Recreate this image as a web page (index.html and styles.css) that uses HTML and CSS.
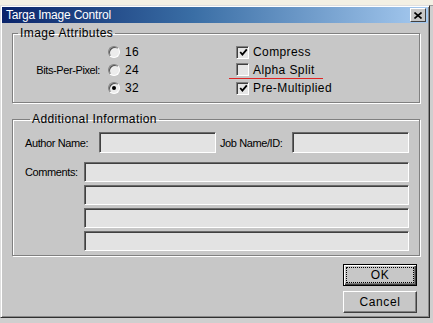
FILE: index.html
```html
<!DOCTYPE html>
<html lang="en">

<head>
    <meta charset="UTF-8">
    <title>Targa Image Control</title>
    <link rel="stylesheet" href="styles.css">
</head>

<body>
    <div class="app-strip"></div>

    <div class="dialog">
        <div class="titlebar">
            <span class="title">Targa Image Control</span>
            <span class="close">
                <svg width="8" height="7" viewBox="0 0 8 7">
                    <path d="M0.5 0.5 L7.5 6.5 M7.5 0.5 L0.5 6.5" stroke="#000" stroke-width="1.6" fill="none" />
                </svg>
            </span>
        </div>

        <div class="content">
            <fieldset class="group">
                <legend>Image Attributes</legend>
                <div class="attr-row">
                    <div class="bpp-col">
                        <span class="field-label">Bits-Per-Pixel:</span>
                    </div>
                    <div class="radio-col">
                        <label class="opt"><span class="radio"></span>16</label>
                        <label class="opt"><span class="radio"></span>24</label>
                        <label class="opt"><span class="radio checked"></span>32</label>
                    </div>
                    <div class="check-col">
                        <label class="opt">
                            <span class="check">
                                <svg width="9" height="9" viewBox="0 0 9 9"><path d="M1.2 4 L3.4 6.6 L7.8 1.4" stroke="#000" stroke-width="1.8" fill="none" /></svg>
                            </span>Compress
                        </label>
                        <label class="opt marked"><span class="check"></span>Alpha Split</label>
                        <label class="opt">
                            <span class="check">
                                <svg width="9" height="9" viewBox="0 0 9 9"><path d="M1.2 4 L3.4 6.6 L7.8 1.4" stroke="#000" stroke-width="1.8" fill="none" /></svg>
                            </span>Pre-Multiplied
                        </label>
                    </div>
                </div>
            </fieldset>

            <fieldset class="group info">
                <legend>Additional Information</legend>
                <div class="name-row">
                    <span class="field-label author">Author Name:</span>
                    <span class="text-box short"></span>
                    <span class="field-label job">Job Name/ID:</span>
                    <span class="text-box short"></span>
                </div>
                <div class="comments">
                    <span class="field-label comment-label">Comments:</span>
                    <div class="comment-lines">
                        <span class="text-box line"></span>
                        <span class="text-box line"></span>
                        <span class="text-box line"></span>
                        <span class="text-box line"></span>
                    </div>
                </div>
            </fieldset>

            <div class="actions">
                <button class="btn default"><span>OK</span></button>
                <button class="btn">Cancel</button>
            </div>
        </div>
    </div>
</body>

</html>
```

FILE: styles.css
```css
* {
    margin: 0;
    padding: 0;
    box-sizing: border-box;
}

body {
    width: 433px;
    height: 323px;
    overflow: hidden;
    background-color: #cfcfcf;
    font-family: 'Liberation Sans', Arial, sans-serif;
    font-size: 12px;
    color: #000;
}

.app-strip {
    height: 6px;
    background-color: #f3f0e4;
    border-bottom: 1px solid #9a9a9a;
}

.dialog {
    width: 430px;
    height: 313px;
    margin-top: -1px;
    background-color: #c7c7c7;
    border: 1px solid;
    border-color: #dedede #303030 #303030 #dedede;
    box-shadow: inset 1px 1px 0 #fff, inset -1px -1px 0 #8a8a8a;
    padding: 1px;
    display: flex;
    flex-direction: column;
}

.titlebar {
    height: 16px;
    background: linear-gradient(to right, #0a246a 0%, #3a6ea5 45%, #a6caf0 100%);
    display: flex;
    align-items: center;
    justify-content: space-between;
    padding: 0 2px 0 4px;
}

.title {
    color: #fff;
    font-size: 12px;
    letter-spacing: -0.2px;
}

.close {
    width: 16px;
    height: 14px;
    background-color: #c7c7c7;
    border: 1px solid;
    border-color: #fff #404040 #404040 #fff;
    display: flex;
    align-items: center;
    justify-content: center;
}

.content {
    flex: 1;
    padding: 3px 8px 0 10px;
    display: flex;
    flex-direction: column;
}

.group {
    border: 1px solid #808080;
    box-shadow: 1px 1px 0 #fff, inset 1px 1px 0 #fff;
    padding: 3px 0 5px 0;
    min-width: 0;
}

.group legend {
    margin-left: 5px;
    padding: 0 2px;
    line-height: 14px;
    letter-spacing: 0.4px;
}

/* image attributes */

.attr-row {
    display: flex;
    height: 54px;
}

.bpp-col {
    width: 88px;
    display: flex;
    align-items: center;
    justify-content: flex-end;
    padding-right: 1px;
}

.field-label {
    font-size: 11px;
    letter-spacing: -0.4px;
    white-space: nowrap;
}

.radio-col {
    width: 128px;
    padding-left: 7px;
    display: flex;
    flex-direction: column;
}

.check-col {
    display: flex;
    flex-direction: column;
}

.opt {
    height: 18px;
    display: flex;
    align-items: center;
    letter-spacing: 0.4px;
}

.radio-col .opt {
    gap: 5px;
}

.check-col .opt {
    gap: 4px;
    padding-left: 7px;
}

.check-col .marked {
    width: 94px;
    border-bottom: 1px solid #e02424;
}

.radio {
    width: 12px;
    height: 12px;
    border-radius: 50%;
    border: 1px solid;
    border-color: #808080 #fff #fff #808080;
    box-shadow: inset 1px 1px 0 #505050;
    background-color: #ececec;
    display: flex;
    align-items: center;
    justify-content: center;
}

.radio.checked::after {
    content: "";
    width: 4px;
    height: 4px;
    border-radius: 50%;
    background-color: #000;
}

.check {
    width: 13px;
    height: 13px;
    border: 1px solid;
    border-color: #808080 #fff #fff #808080;
    box-shadow: inset 1px 1px 0 #404040;
    background-color: #e6e6e6;
    display: flex;
    align-items: center;
    justify-content: center;
    padding: 1px 0 0 1px;
}

/* additional information */

.info {
    margin-top: 9px;
    padding: 6px 0 4px 12px;
}

.name-row {
    display: flex;
    align-items: center;
    height: 21px;
}

.author {
    width: 74px;
}

.job {
    width: 72px;
    margin-left: 4px;
}

.text-box {
    display: block;
    height: 21px;
    background-color: #e3e3e3;
    border: 1px solid;
    border-color: #6a6a6a #fff #fff #6a6a6a;
    box-shadow: inset 1px 1px 0 #404040;
}

.text-box.short {
    width: 117px;
}

.comments {
    display: flex;
    margin-top: 9px;
}

.comment-label {
    width: 59px;
    line-height: 20px;
}

.comment-lines {
    display: flex;
    flex-direction: column;
    gap: 3px;
}

.text-box.line {
    width: 325px;
    height: 20px;
}

/* buttons */

.actions {
    display: flex;
    flex-direction: column;
    align-items: flex-end;
    gap: 5px;
    margin-top: 8px;
    padding-right: 3px;
}

.btn {
    width: 74px;
    height: 22px;
    background-color: #c7c7c7;
    border: 1px solid;
    border-color: #fff #404040 #404040 #fff;
    box-shadow: inset -1px -1px 0 #808080;
    font-family: 'Liberation Sans', Arial, sans-serif;
    font-size: 12px;
    letter-spacing: 0.6px;
    color: #000;
}

.btn.default {
    border: 1px solid #000;
    box-shadow: inset 1px 1px 0 #fff, inset -1px -1px 0 #404040, inset -2px -2px 0 #808080;
    outline: 1px dotted #000;
    outline-offset: -4px;
}
```
